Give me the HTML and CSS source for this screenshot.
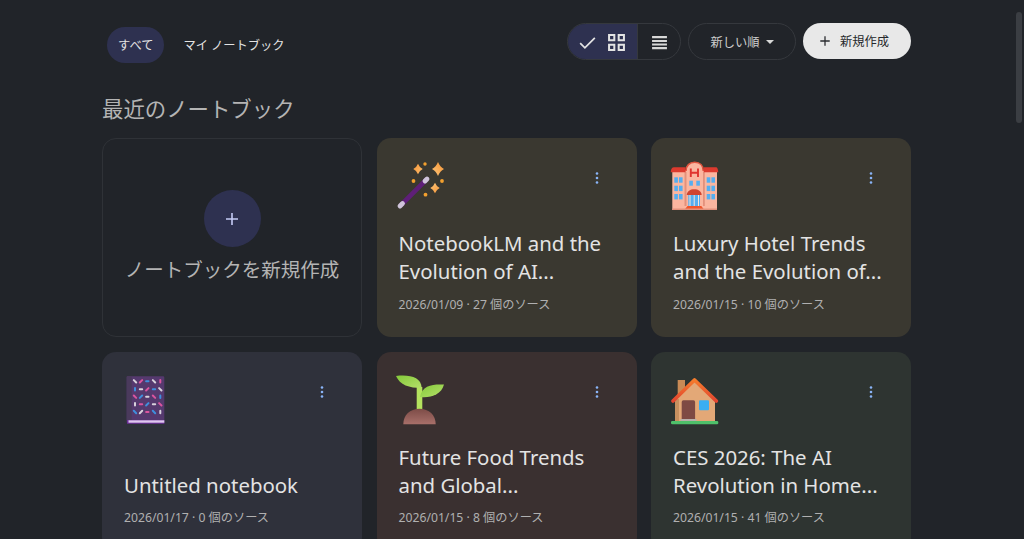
FILE: index.html
```html
<!DOCTYPE html>
<html lang="ja">
<head>
<meta charset="utf-8">
<title>NotebookLM</title>
<link rel="stylesheet" href="styles.css">
</head>
<body>
<div class="app">
  <main class="content">
    <header class="topbar">
      <nav class="tabs">
        <span class="tab tab-active">すべて</span>
        <span class="tab">マイ ノートブック</span>
      </nav>
      <div class="actions">
        <div class="toggle">
          <span class="toggle-seg toggle-on">
            <svg class="ico" viewBox="0 0 24 24"><path d="M3.600 12.600l5.400 5.400L20.400 6.600" fill="none" stroke="#e3e3e3" stroke-width="2"/></svg>
            <svg class="ico" viewBox="0 0 24 24"><path d="M3.500 3.500h6v6h-6zM14.500 3.500h6v6h-6zM3.500 14.500h6v6h-6zM14.500 14.500h6v6h-6z" fill="none" stroke="#e3e3e3" stroke-width="2.300"/></svg>
          </span>
          <span class="toggle-seg">
            <svg class="ico" viewBox="0 0 24 24"><path d="M3.500 4.500h17v2.600h-17zM3.500 9h17v2.500h-17zM3.500 13h17v2.500h-17zM3.500 17h17v2.600h-17z" fill="#d8d8d8"/></svg>
          </span>
        </div>
        <button class="sort">新しい順<span class="caret"></span></button>
        <button class="create"><svg class="plus" viewBox="0 0 14 14"><path d="M7 1.500v11M1.500 7h11" stroke="#2a2c30" stroke-width="1.500"/></svg>新規作成</button>
      </div>
    </header>

    <h1 class="section-title">最近のノートブック</h1>

    <section class="grid">
      <article class="card card-new">
        <span class="new-circle"><svg viewBox="0 0 14 14" class="new-plus"><path d="M7 1v12M1 7h12" stroke="#c5cbf5" stroke-width="1.600"/></svg></span>
        <span class="new-label">ノートブックを新規作成</span>
      </article>

      <article class="card olive">
        <div class="card-head">
          <svg class="emoji" viewBox="0 0 52 52">
            <defs><radialGradient id="spark"><stop offset="0" stop-color="#ffd590"/><stop offset="1" stop-color="#f9a44a"/></radialGradient></defs>
            <path d="M6 44L31 19" stroke="#5e1f78" stroke-width="4.600"/>
            <path d="M5 45L7.500 42.500M30 20L32 18" stroke="#cfc4da" stroke-width="4.800" stroke-linecap="round"/>
            <path d="M43 1Q45 6 49 8Q45 10 43 15Q41 10 37 8Q41 6 43 1zM23 2.700Q24.500 6.500 27.700 8Q24.500 9.500 23 13.300Q21.500 9.500 18.300 8Q21.500 6.500 23 2.700zM40 21.700Q41.500 25.500 44.700 27Q41.500 28.500 40 32.300Q38.500 28.500 35.300 27Q38.500 25.500 40 21.700z" fill="url(#spark)"/>
            <g fill="#f2a02e"><circle cx="30" cy="3" r="1.700"/><circle cx="18.500" cy="20" r="1.900"/><circle cx="47" cy="20" r="1.900"/><circle cx="30.500" cy="33.700" r="1.900"/></g>
          </svg>
          <button class="more"><svg viewBox="0 0 4 12"><circle cx="2" cy="1.500" r="1.300"/><circle cx="2" cy="6" r="1.300"/><circle cx="2" cy="10.500" r="1.300"/></svg></button>
        </div>
        <h2 class="card-title">NotebookLM and the Evolution of AI...</h2>
        <p class="card-meta">2026/01/09 · 27 個のソース</p>
      </article>

      <article class="card olive">
        <div class="card-head">
          <svg class="emoji" viewBox="0 0 52 52">
            <rect x="3.300" y="9" width="44.700" height="40" fill="#fbb6a0"/>
            <path d="M17 49V10C17 4.500 20.500 1.300 25.700 1.300S34.300 4.500 34.300 10V49z" fill="#fbb6a0"/>
            <path d="M17 10C17 4.500 20.500 1.300 25.700 1.300S34.300 4.500 34.300 10" fill="none" stroke="#e0553f" stroke-width="1.600"/>
            <path d="M15.500 11h2v34h-2zM34 11h1.800v34H34z" fill="#e3917c"/>
            <path d="M2 11.300h14.600V6.300H5C3 6.300 2 8 1.700 11.300zM49.300 11.300H34.700V6.300H47c1.500 0 2 2 2.300 5z" fill="#dc3a2e"/>
            <path d="M21.800 7.500v8.400M29 7.500v8.400M21.800 11.700H29" stroke="#e0332e" stroke-width="1.900" fill="none"/>
            <g fill="#55aef0">
              <rect x="5.300" y="16.300" width="3.600" height="5.400"/><rect x="10" y="16.300" width="3.600" height="5.400"/>
              <rect x="5.300" y="24.700" width="3.600" height="5.400"/><rect x="10" y="24.700" width="3.600" height="5.400"/>
              <rect x="5.300" y="33" width="3.600" height="5.400"/><rect x="10" y="33" width="3.600" height="5.400"/>
              <rect x="37.700" y="16.300" width="3.600" height="5.400"/><rect x="42.400" y="16.300" width="3.600" height="5.400"/>
              <rect x="37.700" y="24.700" width="3.600" height="5.400"/><rect x="42.400" y="24.700" width="3.600" height="5.400"/>
              <rect x="37.700" y="33" width="3.600" height="5.400"/><rect x="42.400" y="33" width="3.600" height="5.400"/>
              <rect x="20.300" y="19.700" width="3.600" height="5"/><rect x="27.300" y="19.700" width="3.600" height="5"/>
            </g>
            <rect x="19.300" y="33" width="11.700" height="12" fill="#55aef0"/>
            <path d="M21 33v12M25.200 33v12M29.500 33v12" stroke="#f4e6dc" stroke-width="1"/>
            <path d="M17.700 34c.4-3.800 3.500-5.700 7.500-5.700s7.100 1.900 7.500 5.700z" fill="#cf4430"/>
            <path d="M18.500 45h13.800l3 4H15.300z" fill="#f0562c"/>
            <rect x="3.300" y="47.500" width="44.700" height="1.500" fill="#e3917c"/>
          </svg>
          <button class="more"><svg viewBox="0 0 4 12"><circle cx="2" cy="1.500" r="1.300"/><circle cx="2" cy="6" r="1.300"/><circle cx="2" cy="10.500" r="1.300"/></svg></button>
        </div>
        <h2 class="card-title">Luxury Hotel Trends and the Evolution of...</h2>
        <p class="card-meta">2026/01/15 · 10 個のソース</p>
      </article>

      <article class="card slate">
        <div class="card-head">
          <svg class="emoji" viewBox="0 0 52 52">
            <path d="M8 1.300h35a1.300 1.300 0 0 1 1.300 1.300V48.700H8.500a2 2 0 0 1-1.800-2V2.600a1.300 1.300 0 0 1 1.300-1.300z" fill="#55396e"/>
            <rect x="6.700" y="1.300" width="5" height="44" fill="#4a3a5c"/>
            <rect x="7" y="45" width="37.300" height="3.700" fill="#6b2e97"/>
            <rect x="8.500" y="45.300" width="35.800" height="2.400" fill="#dfc8ef"/>
            <g stroke-width="2" stroke-linecap="round" fill="none">
              <path stroke="#d8d2dc" d="M13.800 5.100l2.400 2.400M32.800 5.100l2.400 2.400M19.800 14.300h2.400M39.100 13.100l2.400 2.400M26.100 21.700h2.400M15 28.100v2.400M32.800 29.300h2.400M19.800 38.200l2.400-2.400M40.300 35.800v2.400"/>
              <path stroke="#d9559f" d="M19.800 7.500l2.400-2.400M40.300 5.100v2.400M26.100 15.500l2.400-2.400M13.800 20.500l2.400 2.400M32.800 20.500l2.400 2.400M19.800 29.300h2.400M39.100 28.100l2.400 2.400M26.100 37h2.400"/>
              <path stroke="#3f8fdc" d="M26.100 6.300h2.400M15 13.100v2.400M32.800 14.300h2.400M19.800 22.900l2.400-2.400M40.300 20.500v2.400M26.100 30.500l2.400-2.400M13.800 35.800l2.400 2.400M32.800 35.800l2.400 2.400"/>
            </g>
          </svg>
          <button class="more"><svg viewBox="0 0 4 12"><circle cx="2" cy="1.500" r="1.300"/><circle cx="2" cy="6" r="1.300"/><circle cx="2" cy="10.500" r="1.300"/></svg></button>
        </div>
        <h2 class="card-title">Untitled notebook</h2>
        <p class="card-meta">2026/01/17 · 0 個のソース</p>
      </article>

      <article class="card rust">
        <div class="card-head">
          <svg class="emoji" viewBox="0 0 52 52">
            <defs>
              <linearGradient id="leaf" x1="0" y1="0" x2="1" y2="1"><stop offset="0" stop-color="#84c93a"/><stop offset="1" stop-color="#b5e06a"/></linearGradient>
              <linearGradient id="soil" x1="0" y1="0" x2="0" y2="1"><stop offset="0" stop-color="#7d4c47"/><stop offset="1" stop-color="#a8706a"/></linearGradient>
            </defs>
            <rect x="21.700" y="12" width="5.600" height="23" fill="#b4e25e"/>
            <path d="M1 1c14-1.500 25 1 25.700 12C14 13 5 10 1 1z" fill="url(#leaf)"/>
            <path d="M49 9.500C38 9 27 10 25 22c11 1 21-2 24-12.500z" fill="url(#leaf)"/>
            <path d="M8.300 49.300C8.300 40 15 33.700 24.500 33.700S40.700 40 40.700 49.300z" fill="url(#soil)"/>
          </svg>
          <button class="more"><svg viewBox="0 0 4 12"><circle cx="2" cy="1.500" r="1.300"/><circle cx="2" cy="6" r="1.300"/><circle cx="2" cy="10.500" r="1.300"/></svg></button>
        </div>
        <h2 class="card-title">Future Food Trends and Global...</h2>
        <p class="card-meta">2026/01/15 · 8 個のソース</p>
      </article>

      <article class="card moss">
        <div class="card-head">
          <svg class="emoji" viewBox="0 0 52 52">
            <defs><linearGradient id="roof" x1="0" y1="0" x2="0" y2="1"><stop offset="0" stop-color="#f57c2c"/><stop offset="1" stop-color="#e2452f"/></linearGradient></defs>
            <rect x="8.700" y="5" width="7.300" height="16" fill="#c98a55"/>
            <path d="M6 24L25.500 5 46 24v22H6z" fill="#e3a877"/>
            <path d="M6 24h4v22H6z" fill="#c7905f"/>
            <path d="M4 26L25.500 5 47.300 26" fill="none" stroke="url(#roof)" stroke-width="3.800" stroke-linecap="round" stroke-linejoin="round"/>
            <path d="M12.700 27a1.700 1.700 0 0 1 1.700-1.700h10a1.700 1.700 0 0 1 1.700 1.700v17H12.700z" fill="#7e4a44"/>
            <rect x="11.500" y="44" width="16" height="2" fill="#b8b0ab"/>
            <rect x="30" y="25.300" width="10" height="10" rx="1" fill="#39aef2"/>
            <rect x="2" y="46" width="47.300" height="3.300" rx="1.300" fill="#4fc06a"/>
          </svg>
          <button class="more"><svg viewBox="0 0 4 12"><circle cx="2" cy="1.500" r="1.300"/><circle cx="2" cy="6" r="1.300"/><circle cx="2" cy="10.500" r="1.300"/></svg></button>
        </div>
        <h2 class="card-title">CES 2026: The AI Revolution in Home...</h2>
        <p class="card-meta">2026/01/15 · 41 個のソース</p>
      </article>
    </section>
  </main>
</div>
<div class="scroll-thumb"></div>
</body>
</html>
```

FILE: styles.css
```css
* { box-sizing: border-box; }
html, body { margin: 0; height: 100%; overflow: hidden; }
body {
  background: #212429;
  font-family: "Noto Sans", "Noto Sans CJK JP", sans-serif;
  color: #e3e3e3;
}
.app { width: 1013px; display: flex; justify-content: center; }
.content { width: 809px; padding-top: 23px; }

.topbar { display: flex; justify-content: space-between; align-items: flex-start; height: 40px; }
.tabs { display: flex; align-items: center; gap: 5px; margin-left: 5px; margin-top: 4px; }
.tab {
  height: 36px; padding: 0 14px; border-radius: 18px;
  display: flex; align-items: center;
  font-size: 12.250px; color: #e3e3e3;
}
.tab-active { background: #2e3150; padding: 0 11px; }

.actions { display: flex; gap: 7px; }
.toggle {
  display: flex; height: 37px; width: 114px;
  border: 1px solid #35383d; border-radius: 18.500px; overflow: hidden;
}
.toggle-seg { display: flex; align-items: center; justify-content: center; flex: 1; padding-top: 1px; }
.toggle-on { flex: 0 0 70px; gap: 8px; padding-right: 2px; background: #2e3150; border-right: 1px solid #35383d; }
.ico { width: 21px; height: 21px; }

.sort {
  width: 108px; height: 37px; border: 1px solid #35383d; border-radius: 18.500px;
  background: transparent; color: #cfcfcf; font: inherit; font-size: 12.250px;
  display: flex; align-items: center; justify-content: center; gap: 6px;
}
.caret { width: 0; height: 0; border: 4.500px solid transparent; border-top: 4.500px solid #d8d8d8; border-bottom: 0; }
.create {
  width: 108px; height: 36px; border: 0; border-radius: 18px; padding: 0 6px 0 0;
  background: #e8e8e8; color: #26282c; font: inherit; font-size: 12.250px;
  display: flex; align-items: center; justify-content: center; gap: 9px;
}
.plus { width: 12px; height: 12px; }

.section-title {
  margin: 31px 0 0; height: 30px; line-height: 30px;
  font-size: 21.400px; font-weight: 400; color: #b4b4b4;
}

.grid {
  display: grid; grid-template-columns: repeat(3, 260px);
  justify-content: space-between; grid-auto-rows: 199px; row-gap: 14.500px;
  margin-top: 14px;
}
.card {
  border-radius: 14px; padding: 23px 18px 0;
  display: flex; flex-direction: column;
}
.olive { background: #3a3830; }
.slate { background: #2f313b; }
.rust { background: #3a3030; }
.moss { background: #2e3431; }
.card-new {
  border: 1px solid #2f3237; align-items: center; padding: 51px 0 0;
}
.new-circle {
  width: 57px; height: 57px; border-radius: 50%; background: #2e3150;
  display: flex; align-items: center; justify-content: center;
}
.new-plus { width: 14px; height: 14px; }
.new-label { margin-top: 8px; font-size: 19.500px; line-height: 30px; color: #b4b4b4; }

.card-head { display: flex; justify-content: space-between; align-items: flex-start; height: 52px; }
.emoji { width: 52px; height: 52px; flex: none; }
.more {
  width: 4px; height: 12px; padding: 0; border: 0; background: none;
  margin: 11px 20px 0 0; display: flex;
}
.more svg { width: 4px; height: 12px; fill: #8ab4f8; }
.card-title {
  margin: auto 0 0; padding: 0 4px;
  font-size: 20.400px; font-weight: 400; line-height: 28px; color: #e3e3e3;
  max-height: 56px;
}
.card-meta {
  margin: 10.500px 0 23.500px; padding: 0 4px;
  font-size: 12.200px; line-height: 18px; color: #b0b0b0;
}
.scroll-thumb {
  position: absolute; top: 12px; right: 2px; width: 6px; height: 111px;
  background: #3b3e43; border-radius: 3px;
}
```
